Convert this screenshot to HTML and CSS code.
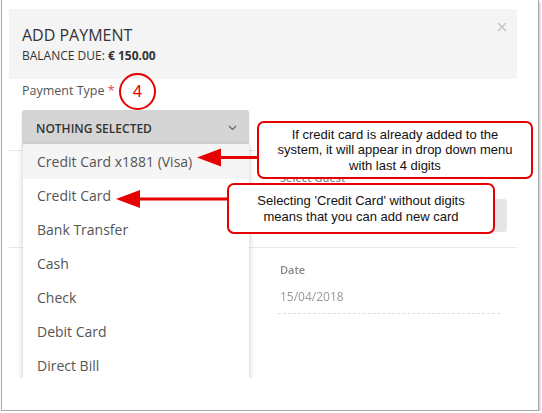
FILE: index.html
```html
<!DOCTYPE html>
<html>
<head>
<meta charset="utf-8">
<link rel="stylesheet" href="styles.css">
</head>
<body>
<div class="frame">
  <div class="modal">
    <div class="modal-header">
      <div class="title">ADD PAYMENT</div>
      <div class="balance">BALANCE DUE: <b>€ 150.00</b></div>
      <svg class="close" width="10" height="10" viewBox="0 0 10 10"><path d="M1 1L9 9M9 1L1 9" stroke="#c4c4c4" stroke-width="1.4"/></svg>
    </div>
    <div class="modal-body">
      <div class="field-label">Payment Type <span class="req">*</span><span class="step">4</span></div>
      <div class="select-wrap">
        <div class="select-btn"><span>NOTHING SELECTED</span>
          <svg width="9" height="6" viewBox="0 0 9 6"><path d="M1 1l3.5 3.5L8 1" fill="none" stroke="#666" stroke-width="1.2"/></svg>
        </div>
        <ul class="menu">
          <li class="active">Credit Card x1881 (Visa)</li>
          <li>Credit Card</li>
          <li>Bank Transfer</li>
          <li>Cash</li>
          <li>Check</li>
          <li>Debit Card</li>
          <li>Direct Bill</li>
        </ul>
      </div>
      <div class="sep"></div>
      <div class="row blurred">
        <div class="col"></div>
        <div class="col">
          <div class="small-label">Select Guest</div>
          <div class="gray-btn"></div>
        </div>
      </div>
      <div class="sep sep-wide"></div>
      <div class="row blurred">
        <div class="col"></div>
        <div class="col">
          <div class="small-label date-label">Date</div>
          <div class="date-value">15/04/2018</div>
        </div>
      </div>
    </div>
  </div>
  <div class="callout callout-1">If credit card is already added to the<br>system, it will appear in drop down menu<br>with last 4 digits</div>
  <div class="callout callout-2">Selecting 'Credit Card' without digits<br>means that you can add new card</div>
  <svg class="arrows" width="542" height="413" viewBox="0 0 542 413">
    <line x1="218" y1="157.5" x2="258" y2="157.5" stroke="#e60000" stroke-width="3"/>
    <polygon points="197,157.5 221,148.5 221,166.5" fill="#e60000"/>
    <line x1="136" y1="199" x2="228" y2="199" stroke="#e60000" stroke-width="3"/>
    <polygon points="116,199 140,190 140,208" fill="#e60000"/>
  </svg>
</div>
</body>
</html>
```
FILE: styles.css
```css
* { box-sizing: border-box; }
html, body { margin: 0; padding: 0; background: #fff; }
body { font-family: "Open Sans", "Liberation Sans", sans-serif; color: #333; }

.frame {
  position: relative;
  margin-left: 1px;
  width: 538px;
  height: 411px;
  border: 1px solid #a8a8a8;
  border-top: none;
  box-shadow: 1px 2px 2px rgba(0,0,0,0.25);
  padding: 9px 0 0 7px;
  overflow: hidden;
}

.modal { width: 508px; height: 369px; overflow: hidden; padding: 0 8px; margin-left: -8px; width: 524px; }

.modal-header {
  position: relative;
  background: #f4f4f4;
  height: 70px;
  width: 508px;
  padding: 15px 13px 0;
}
.title { font-size: 16px; line-height: 22px; color: #333; }
.balance { font-size: 12px; line-height: 16px; margin-top: 2px; color: #333; }
.balance b { font-weight: 700; }
.close { position: absolute; left: 488px; top: 13px; }

.modal-body { padding: 0 10px 0 13px; width: 508px; }

.field-label {
  position: relative;
  font-size: 12.5px;
  color: #555;
  line-height: 18px;
  margin-top: 3px;
  height: 24px;
}
.req { color: #e8445a; }
.step {
  position: absolute;
  left: 97px;
  top: -9px;
  width: 37px;
  height: 37px;
  border: 2.5px solid #e60000;
  border-radius: 50%;
  color: #e60000;
  font-family: "Liberation Sans", Arial, sans-serif;
  font-size: 17px;
  display: flex;
  align-items: center;
  justify-content: center;
}

.select-wrap { position: relative; width: 227px; margin-top: 4px; }
.select-btn {
  height: 36px;
  background: #d5d5d5;
  border-radius: 3px 3px 0 0;
  display: flex;
  align-items: center;
  justify-content: space-between;
  padding: 0 12px 0 14px;
  font-size: 12px;
  font-weight: 600;
  color: #333;
  box-shadow: 0 1px 2px rgba(0,0,0,0.15);
}

.menu {
  position: absolute;
  z-index: 2;
  left: 1px;
  top: 34px;
  width: 226px;
  height: 250px;
  margin: 0;
  padding: 0;
  list-style: none;
  background: #fff;
  overflow: hidden;
  box-shadow: 0 2px 6px rgba(0,0,0,0.22);
}
.menu li {
  height: 34px;
  line-height: 34px;
  padding-left: 14px;
  font-size: 14px;
  color: #555;
}
.menu li.active { background: #f5f5f5; height: 35px; line-height: 35px; }

.sep { height: 1px; background: #e8e8e8; margin: 4px -10px 0 -13px; }
.sep-wide { margin-top: 15px; }

.row { display: grid; grid-template-columns: 245px 227px; column-gap: 13px; }
.blurred { filter: blur(0.7px); }
.small-label { font-size: 11px; font-weight: 600; color: #888; line-height: 14px; }
.row .small-label { margin-top: 20px; }
.gray-btn { height: 33px; background: #e6e6e6; margin-top: 14px; border-radius: 3px; }
.row .date-label { margin-top: 15px; }
.date-value {
  font-size: 12px;
  color: #999;
  line-height: 16px;
  margin-top: 12px;
  padding-bottom: 8px;
  border-bottom: 1px dashed #ddd;
  width: 222px;
  margin-left: -2px;
  padding-left: 2px;
}

.callout {
  position: absolute;
  z-index: 3;
  background: #fff;
  border: 2px solid #e60000;
  border-radius: 7px;
  font-family: "Liberation Sans", Arial, sans-serif;
  font-size: 13px;
  line-height: 15.5px;
  color: #111;
  text-align: center;
  display: flex;
  align-items: center;
  justify-content: center;
}
.callout-1 { left: 255px; top: 121px; width: 276px; height: 58px; }
.callout-2 { left: 225px; top: 183px; width: 268px; height: 51px; }

.arrows { position: absolute; z-index: 4; left: -2px; top: 0; pointer-events: none; }
```
